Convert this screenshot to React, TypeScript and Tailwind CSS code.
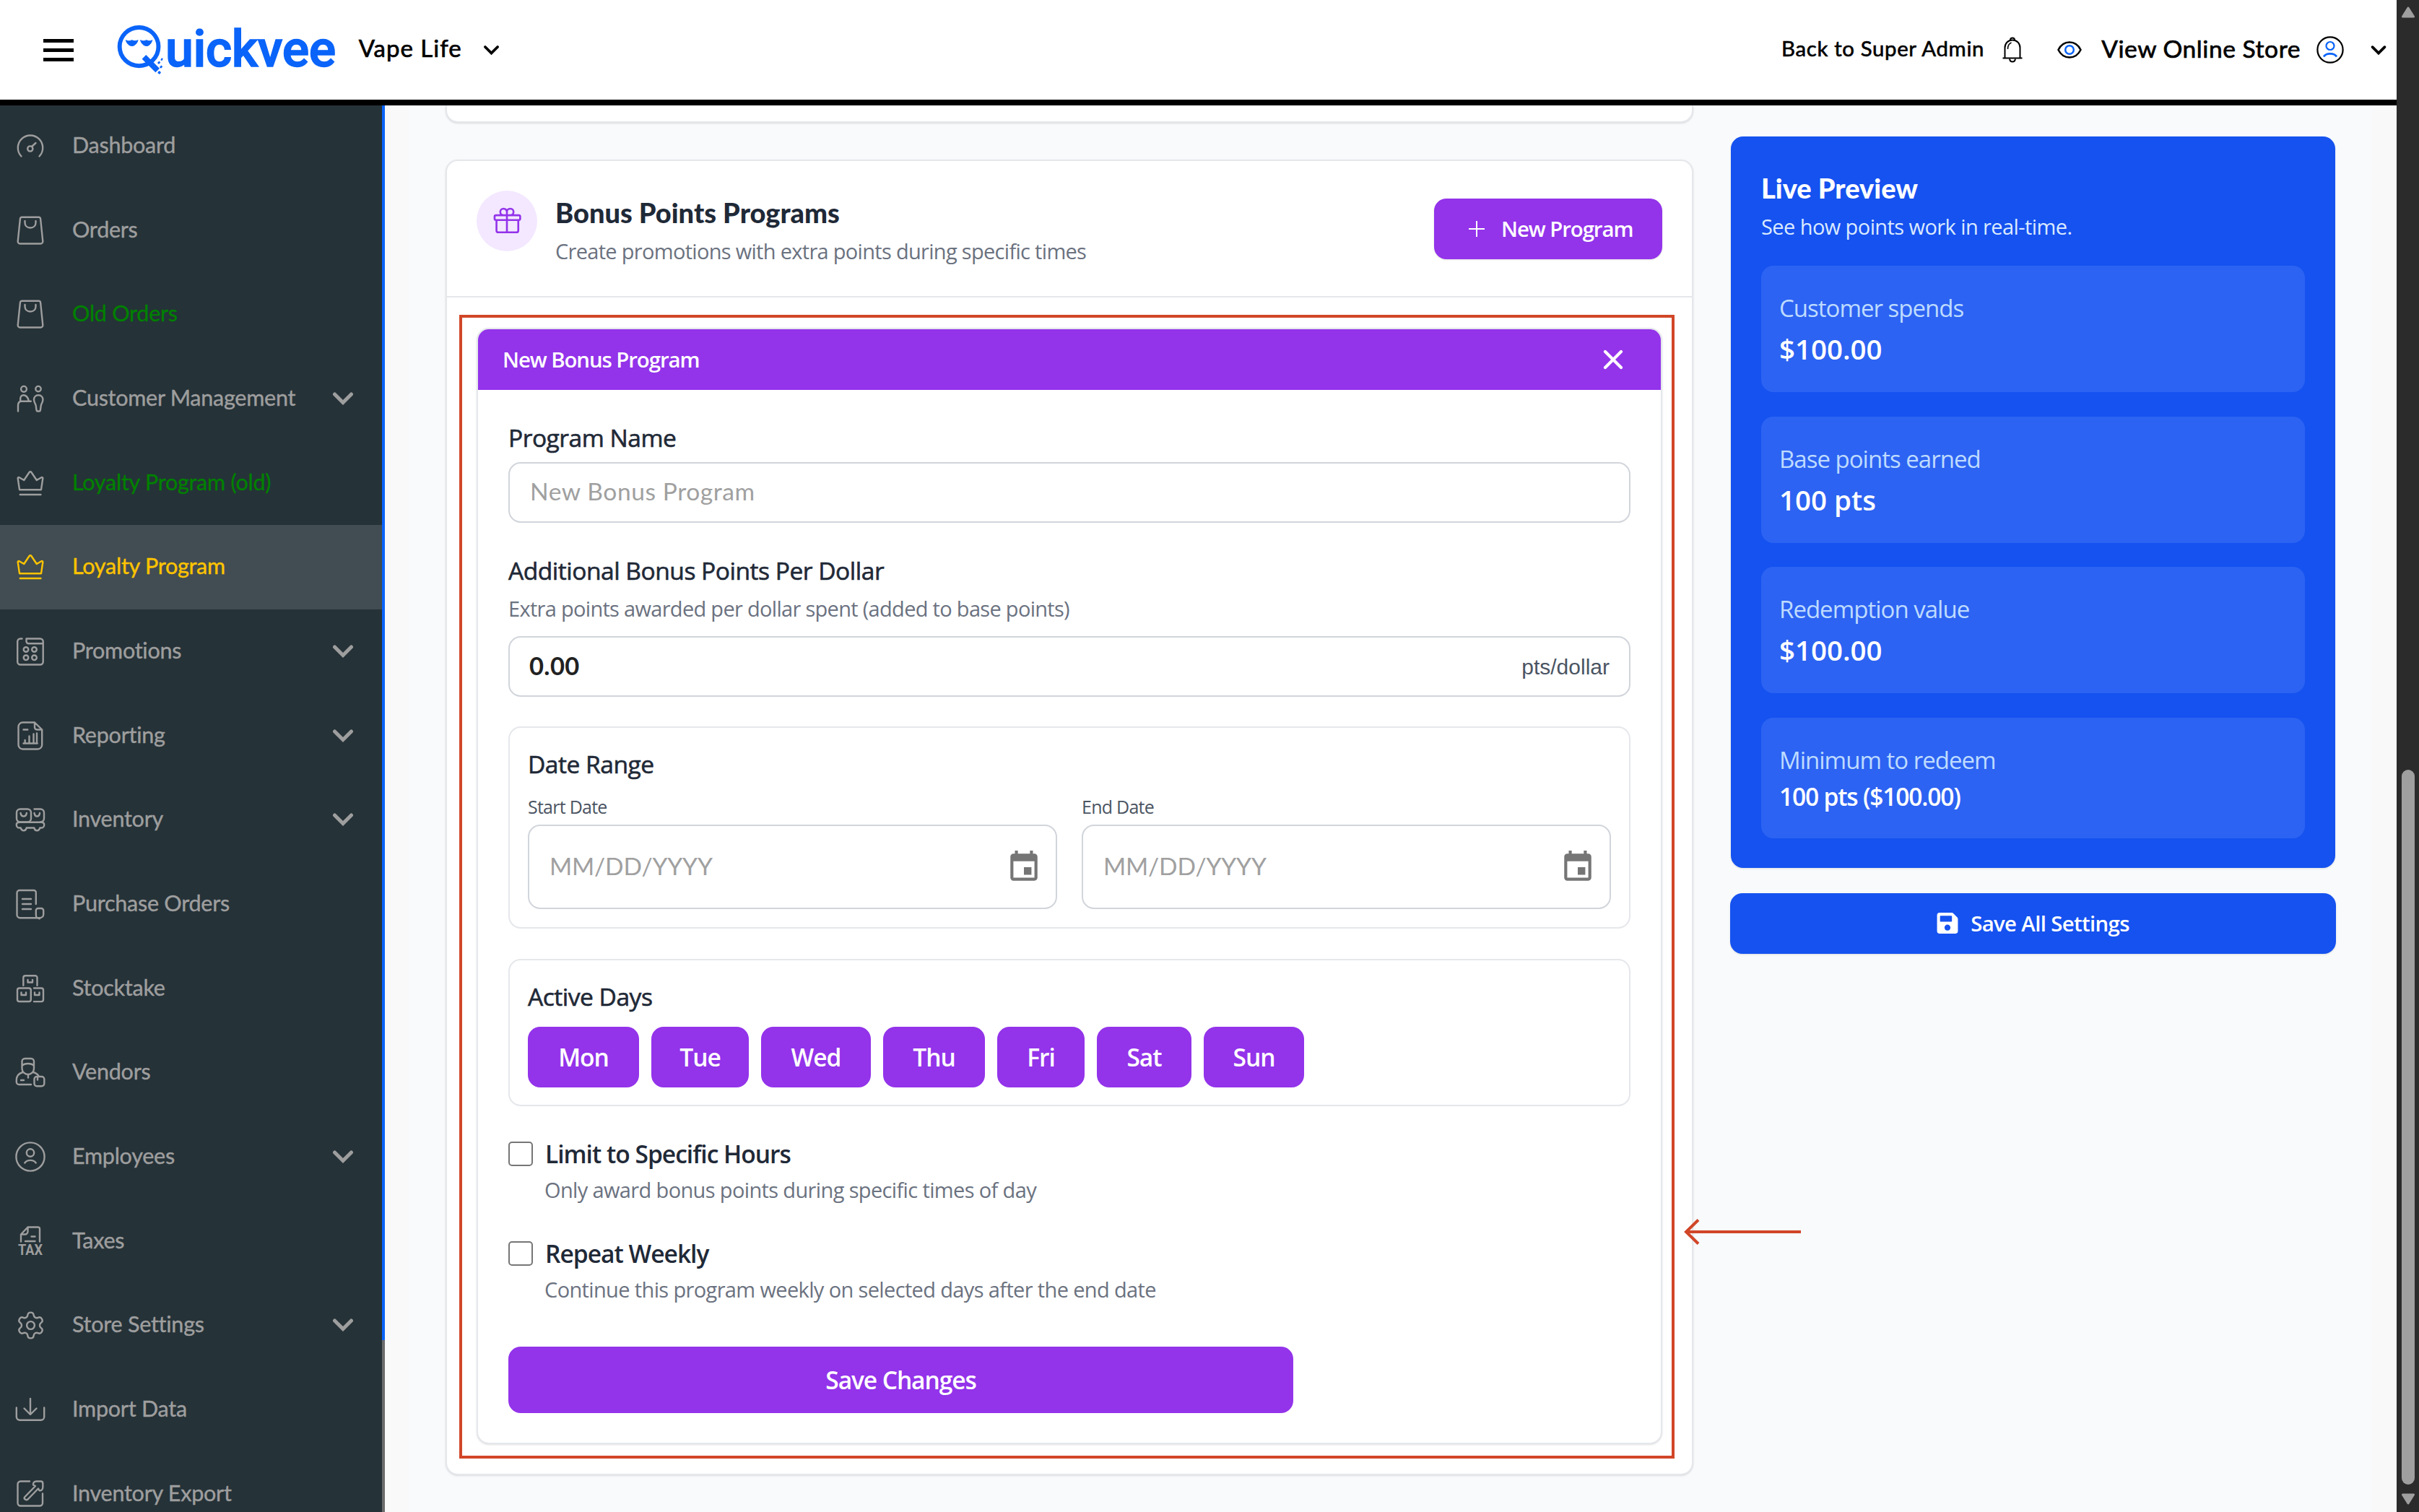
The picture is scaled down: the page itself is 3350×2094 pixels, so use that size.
import React from 'react';
import { Settings } from 'lucide-react';
import { MdEvent } from 'react-icons/md';
import { FaSave } from 'react-icons/fa';
import { HiOutlineGift } from 'react-icons/hi2';
import clsx from 'clsx';

interface NavItem { label: string; icon: React.ReactNode; expandable?: boolean; legacy?: boolean; active?: boolean }

const Glyph: React.FC<{ children: React.ReactNode }> = ({ children }) => (
  <svg viewBox="0 0 40 40" className="w-10 h-10 overflow-visible" fill="none" stroke="currentColor" strokeWidth={2.4} strokeLinecap="round" strokeLinejoin="round">
    {children}
  </svg>
);

const DashboardIcon = () => (
  <Glyph>
    <path d="M7.5 34.5A17.2 17.2 0 1 1 32.5 34.5" />
    <circle cx="19.8" cy="24" r="3.6" />
    <path d="M22 21l5.5-5" />
  </Glyph>
);

const BagIcon = () => (
  <Glyph>
    <path d="M8.5 1.8h23a2.6 2.6 0 0 1 2.6 2.4l3.2 31a3 3 0 0 1-3 3.3H5.700a3 3 0 0 1-3-3.300l3.200-31a2.600 2.600 0 0 1 2.600-2.400z" />
    <path d="M12.5 7v2.500c0 4 3 7 7.500 7s7.500-3 7.500-7V7" />
  </Glyph>
);

const CustomersIcon = () => (
  <Glyph>
    <circle cx="11" cy="6.800" r="3.900" />
    <circle cx="31" cy="6.600" r="3.700" />
    <path d="M3 37.500V30c0-3.800 1.800-6.200 4.800-6.200h13M6.200 23.500v-3.300c0-3 1.800-4.900 4.300-4.900 3.700 0 5.800 2.300 7.300 7.500" />
    <path d="M31.200 15.200c-3.800 0-6.200 2.800-6.200 6.300 0 3.600 2.200 5.400 2.700 8.300l.8 6.200c.1.900.8 1.500 1.700 1.500h2c.9 0 1.600-.6 1.700-1.500l.8-6.200c.5-2.900 2.700-4.700 2.700-8.300 0-3.500-2.400-6.300-6.200-6.300z" />
  </Glyph>
);

const CrownIcon = () => (
  <Glyph>
    <path d="M5 29.200 2.700 13.500c-.2-1.200 1-1.900 2-1.300l6.500 3.800L18.600 5c.7-1.100 2.100-1.100 2.800 0L28.800 16l6.500-3.800c1-.6 2.200.1 2 1.300L35 29.200z" />
    <path d="M5.800 36h28.600" />
  </Glyph>
);

const PromotionsIcon = () => (
  <Glyph>
    <path d="M8.500 2.500H6.200a4 4 0 0 0-4 4v28a4 4 0 0 0 4 4h27.500a4 4 0 0 0 4-4v-28a4 4 0 0 0-4-4H14.500v3.800a3 3 0 0 0 3 3H36" />
    <circle cx="14" cy="17.500" r="3.300" /><circle cx="25.500" cy="17.500" r="3.300" />
    <circle cx="14" cy="28.800" r="3.300" /><circle cx="25.500" cy="28.800" r="3.300" />
  </Glyph>
);

const ReportingIcon = () => (
  <Glyph>
    <path d="M26 1.500H9.500a6 6 0 0 0-6 6v25a6 6 0 0 0 6 6h20.700a6 6 0 0 0 6-6V11.500L26 1.500v6.700a3.300 3.300 0 0 0 3.300 3.300h6.900" />
    <path d="M10.500 11.500h5.800M10.500 30.500h19.200M12.600 30v-4M18.500 30v-9.500M24.500 30V17.500M29 30V16.500" />
  </Glyph>
);

const InventoryIcon = () => (
  <Glyph>
    <rect x="1" y="5.500" width="20" height="18" rx="5" />
    <path d="M25.500 5.500h8.500a5 5 0 0 1 5 5v8a5 5 0 0 1-5 5" />
    <path d="M6.500 11c.5 3.200 2 4.500 4.200 4.500s3.700-1.300 4.200-4.500M25.500 11c.5 3.200 1.800 4.500 3.800 4.500s3.300-1.300 3.800-4.500" />
    <path d="M5 23.800h30c2.500 0 4.200 1.300 4.200 3.400S38 31.500 35.500 31.500h-2.200c-.6 2.400-2 3.900-4 3.900s-3.500-1.500-4-3.900H14.700c-.5 2.400-2 3.900-4 3.900s-3.400-1.500-4-3.900H4.500C2 31.500.800 29.300.800 27.200s1.700-3.400 4.200-3.400z" />
  </Glyph>
);

const PurchaseIcon = () => (
  <Glyph>
    <path d="M27.800 20V4a3 3 0 0 0-3-3H5a3.500 3.500 0 0 0-3.500 3.500v30.500a4.200 4.200 0 0 0 4.200 4.200h27.500a5 5 0 0 0 5-5v-5.200a3 3 0 0 0-3-3h-4.400a3 3 0 0 0-3 3v6.200a5 5 0 0 0 5 5" />
    <path d="M9 13h12M9 20h12M9 27h12" />
  </Glyph>
);

const StocktakeIcon = () => (
  <Glyph>
    <path d="M10.300 15.800V5a2.800 2.800 0 0 1 2.800-2.800h13.600A2.800 2.800 0 0 1 29.500 5v10.800" />
    <rect x="2" y="19.500" width="18.800" height="18.500" rx="2.800" />
    <path d="M25 19.500h10.200a2.800 2.800 0 0 1 2.800 2.800v13a2.800 2.800 0 0 1-2.800 2.800H25" />
    <path d="M16.500 8v3.500h6.500V8M7.500 25.500V29H14v-3.500M26 25.500V29h6.500v-3.500" />
  </Glyph>
);

const VendorsIcon = () => (
  <Glyph>
    <path d="M8.500 11V5a4 4 0 0 1 4-4h8.500a4 4 0 0 1 4 4v6M8.500 11c3.500-4 13-4 16.500 0v4c0 4.500-4 8-8.200 8s-8.300-3.500-8.300-8z" />
    <path d="M9.500 20C4 21.500.800 25.500.800 31v2.500A3.500 3.500 0 0 0 4.300 37H21M24 20c3.500 1 6 2.500 7.500 5M17 23.500v4M7 31h4" />
    <rect x="25.500" y="26" width="13.800" height="13.300" rx="3.500" />
    <path d="M30 26.500v4" />
  </Glyph>
);

const EmployeesIcon = () => (
  <Glyph>
    <circle cx="20" cy="20" r="19.600" />
    <circle cx="20" cy="14.500" r="5.200" />
    <path d="M12.300 28.500c3.500-4.800 12-4.800 15.400 0" />
  </Glyph>
);

const TaxesIcon = () => (
  <Glyph>
    <path d="M7 21.500V11.500L16.500 1.500h14a2.500 2.500 0 0 1 2.500 2.500v17.500M7 11.500h5.500a4 4 0 0 0 4-4v-6M21.500 14.500h5M13 21h13.500" />
    <text x="3" y="40" fontSize="20" fontWeight={700} textLength="34" lengthAdjust="spacingAndGlyphs" fontFamily="Roboto, sans-serif" fill="currentColor" stroke="none">TAX</text>
  </Glyph>
);

const ImportIcon = () => (
  <Glyph>
    <path d="M.8 17.500v12.700a4.500 4.500 0 0 0 4.500 4.500h29.400a4.500 4.500 0 0 0 4.500-4.500V17.500M20 5v21.500M11.500 18.500l8.500 8.500 8.500-8.500" />
  </Glyph>
);

const ExportIcon = () => (
  <Glyph>
    <path d="M19 3.500H6.500a4 4 0 0 0-4 4v26a4 4 0 0 0 4 4H33a4 4 0 0 0 4-4V20.500" />
    <path d="M12 25.500 27 10l-3-1.500c-.5-3 1.500-5 4.500-5h6c1.800 0 2.800 1 2.800 2.800v5.500c0 3-2 5-4.800 4.500L31 13.500 16.500 28.500c-2.500 1.800-5.800-.5-4.500-3z" />
  </Glyph>
);

const NAV: NavItem[] = [
  { label: 'Dashboard', icon: <DashboardIcon /> },
  { label: 'Orders', icon: <BagIcon /> },
  { label: 'Old Orders', icon: <BagIcon />, legacy: true },
  { label: 'Customer Management', icon: <CustomersIcon />, expandable: true },
  { label: 'Loyalty Program (old)', icon: <CrownIcon />, legacy: true },
  { label: 'Loyalty Program', icon: <CrownIcon />, active: true },
  { label: 'Promotions', icon: <PromotionsIcon />, expandable: true },
  { label: 'Reporting', icon: <ReportingIcon />, expandable: true },
  { label: 'Inventory', icon: <InventoryIcon />, expandable: true },
  { label: 'Purchase Orders', icon: <PurchaseIcon /> },
  { label: 'Stocktake', icon: <StocktakeIcon /> },
  { label: 'Vendors', icon: <VendorsIcon /> },
  { label: 'Employees', icon: <EmployeesIcon />, expandable: true },
  { label: 'Taxes', icon: <TaxesIcon /> },
  { label: 'Store Settings', icon: <Settings className="w-[43px] h-[43px] -m-[1.5px]" strokeWidth={1.35} />, expandable: true },
  { label: 'Import Data', icon: <ImportIcon /> },
  { label: 'Inventory Export', icon: <ExportIcon /> },
];

const DAYS = [
  { name: 'Mon', width: 'w-[154px]' },
  { name: 'Tue', width: 'w-[135px]' },
  { name: 'Wed', width: 'w-[152px]' },
  { name: 'Thu', width: 'w-[141px]' },
  { name: 'Fri', width: 'w-[121px]' },
  { name: 'Sat', width: 'w-[131px]' },
  { name: 'Sun', width: 'w-[139px]' },
];

const PREVIEW = [
  { label: 'Customer spends', value: '$100.00' },
  { label: 'Base points earned', value: '100 pts' },
  { label: 'Redemption value', value: '$100.00' },
];

const Chevron: React.FC<{ className: string; width?: number }> = ({ className, width = 5 }) => (
  <svg viewBox="0 0 30 20" className={className} fill="none" stroke="currentColor" strokeWidth={width} strokeLinecap="round" strokeLinejoin="miter">
    <path d="M3.500 4 15 15.500 26.500 4" />
  </svg>
);

const Header = () => (
  <header className="flex h-[146px] w-[3319px] items-center border-b-8 border-black bg-white pl-[60px] font-['Lato',sans-serif] text-black">
    <div className="flex w-[42px] flex-col gap-2">
      <span className="h-[5px] bg-black" />
      <span className="h-[5px] bg-black" />
      <span className="h-[5px] bg-black" />
    </div>

    {/* Logo */}
    <div className="ml-[60px] flex items-center text-[#0a64f9]">
      <svg viewBox="0 0 68 70" className="h-[70px] w-[67px]" fill="none" stroke="currentColor">
        <ellipse cx="31" cy="30.500" rx="27.300" ry="27" strokeWidth="6" />
        <path d="M38 45 57 64" strokeWidth="8" />
        <path d="M12.500 21.500c3 1.500 5 1.500 8.500 0 3.500 1.500 5.500 1.500 8.500 0-1.500 5-5 8-8.500 8s-7-3-8.500-8zM33 21.500c3 1.500 5 1.500 8.500 0 3.500 1.500 5 1.500 8 0-1.500 5-4.500 8-8 8s-7-3-8.500-8z" fill="currentColor" stroke="currentColor" strokeWidth="1" />
        <path d="M58 52l2 2M62 48l2 1M61 58l2 2M58 66l3 2" strokeWidth="3.500" />
      </svg>
      <span className="-mt-0.5 font-['Roboto',sans-serif] text-[70px] font-medium leading-[70px] tracking-[-0.007em] [-webkit-text-stroke:1.4px]">uickvee</span>
    </div>

    <span className="-mt-1 ml-[32px] text-[33px] tracking-[0.03em] [-webkit-text-stroke:0.7px]">Vape Life</span>
    <Chevron className="ml-[29px] h-[15px] w-[23px]" width={5} />

    <span className="-mt-1 ml-auto text-[29.400px] tracking-[0.022em] [-webkit-text-stroke:0.6px]">Back to Super Admin</span>
    <svg viewBox="0 0 30 36" className="ml-6 h-9 w-[30px]" fill="none" stroke="black" strokeWidth={2}>
      <path d="M1.500 29.500h27M4.500 29V15C4.500 9 9 4.500 15 4.500S25.500 9 25.500 15v14" />
      <path d="M12 4.500C12 2.500 13 1.500 15 1.500s3 1 3 3M11 30.500c.5 3 1.800 4 4 4s3.500-1 4-4" />
      <path d="M8.500 17c0-5 1.500-7.500 5-9" strokeWidth={1.500} />
    </svg>
    <svg viewBox="0 0 34 24" className="ml-[47px] h-6 w-[34px]" fill="none" strokeWidth={2.500}>
      <path d="M1.500 12C5 5 10.500 1.500 17 1.500S29 5 32.500 12C29 19 23.500 22.500 17 22.500S5 19 1.500 12z" stroke="black" />
      <circle cx="17" cy="12" r="5.800" stroke="#0a64f9" />
    </svg>
    <span className="-mt-1 ml-[27px] text-[33.600px] tracking-[0.016em] [-webkit-text-stroke:0.7px]">View Online Store</span>
    <svg viewBox="0 0 38 38" className="ml-[22px] h-[38px] w-[38px]" fill="none" strokeWidth={2.200}>
      <circle cx="19" cy="19" r="17.600" stroke="black" />
      <circle cx="19" cy="13.500" r="5.500" stroke="#0a64f9" />
      <path d="M10 28.500c3.500-5.500 14.500-5.500 18 0" stroke="#0a64f9" strokeWidth={2.800} />
    </svg>
    <Chevron className="ml-[37px] mr-[14px] h-[15px] w-[22px]" width={5} />
  </header>
);

const Sidebar = () => (
  <aside className="flex h-[1948px] w-[533px] shrink-0 overflow-hidden bg-[#253238] font-['Lato',sans-serif]">
    <nav className="-mt-[2.400px] w-[529px]">
      {NAV.map(item => (
        <a
          key={item.label}
          className={clsx(
            'flex h-[116.670px] items-center pl-[22px] pr-[39px]',
            item.active ? 'bg-[#414d52] text-[#ffc400]' : 'text-[#9e9e9e]',
          )}
        >
          {item.icon}
          <span className={clsx('-mt-0.5 ml-[38px] whitespace-nowrap text-[30.500px] tracking-[-0.008em] [-webkit-text-stroke:0.4px]', item.legacy && 'text-[#008000]')}>{item.label}</span>
          {item.expandable && <Chevron className="ml-auto h-5 w-[30px]" />}
        </a>
      ))}
    </nav>
    <div className="w-1 bg-[#6b6b6b]">
      <div className="h-[1710px] bg-[#0a64f9]" />
    </div>
  </aside>
);

const FieldTitle: React.FC<{ children: React.ReactNode }> = ({ children }) => (
  <div className="h-[50px] text-[33.600px] font-medium leading-[50px] tracking-[-0.015em] [-webkit-text-stroke:0.6px]">{children}</div>
);

const DateField: React.FC<{ label: string }> = ({ label }) => (
  <div className="flex-1">
    <div className="h-[34px] text-[25px] leading-[34px] tracking-[-0.03em] text-[#4b5563]">{label}</div>
    <div className="mt-2 flex h-[117px] items-center justify-between rounded-[17px] border-2 border-[#d1d5db] pl-7 pr-[19px]">
      <span className="-mt-0.5 font-['Lato',sans-serif] text-[33.600px] tracking-[-0.005em] text-[#a0a0a0]">MM/DD/YYYY</span>
      <MdEvent className="h-[50px] w-[50px] text-[#757575]" />
    </div>
  </div>
);

const CheckRow: React.FC<{ title: string; hint: string }> = ({ title, hint }) => (
  <label className="block">
    <div className="flex h-[50px] items-center">
      <span className="h-[34px] w-[34px] rounded-[5px] border-2 border-[#767676] bg-white" />
      <span className="ml-[17px] text-[33.600px] font-semibold leading-[50px] tracking-[-0.03em]">{title}</span>
    </div>
    <div className="ml-[50px] mt-1 h-[42px] text-[29px] leading-[42px] tracking-[-0.022em] text-[#6b7280]">{hint}</div>
  </label>
);

const ProgramForm = () => (
  <div className="overflow-hidden rounded-[17px] border-2 border-[#e5e7eb] bg-white shadow-sm">
    <div className="flex h-[84px] items-center justify-between bg-[#9333ea] pl-[34px] pr-[52px] text-white">
      <span className="text-[29.400px] font-semibold tracking-[-0.037em]">New Bonus Program</span>
      <svg viewBox="0 0 28 28" className="h-7 w-7" stroke="currentColor" strokeWidth={4.200} strokeLinecap="round">
        <path d="M3 3l22 22M25 3 3 25" />
      </svg>
    </div>

    <div className="px-[42px] pb-[41px] pt-[41px]">
      <FieldTitle>Program Name</FieldTitle>
      <div className="mt-[9px] flex h-[84px] items-center rounded-[17px] border-2 border-[#d1d5db] px-7">
        <span className="-mt-1 font-['Lato',sans-serif] text-[33.600px] tracking-[0.017em] text-[#a0a0a0]">New Bonus Program</span>
      </div>

      <div className="mt-[41px]"><FieldTitle>Additional Bonus Points Per Dollar</FieldTitle></div>
      <div className="mt-[7px] h-[42px] text-[29px] leading-[42px] tracking-[-0.024em] text-[#6b7280]">Extra points awarded per dollar spent (added to base points)</div>
      <div className="mt-[17px] flex h-[84px] items-center justify-between rounded-[17px] border-2 border-[#d1d5db] px-[27px]">
        <span className="-mt-0.5 font-['Lato',sans-serif] text-[34.500px] font-bold tracking-[0.01em] text-[#212121]">0.00</span>
        <span className="font-['Liberation_Sans',sans-serif] text-[30px] text-[#4b5563]">pts/dollar</span>
      </div>

      {/* Date range */}
      <div className="mt-[41px] h-[280px] rounded-[17px] border-2 border-[#e5e7eb] px-[25px] pt-[25px]">
        <FieldTitle>Date Range</FieldTitle>
        <div className="mt-[17px] flex gap-[34px]">
          <DateField label="Start Date" />
          <DateField label="End Date" />
        </div>
      </div>

      {/* Active days */}
      <div className="mt-[42px] h-[204px] rounded-[17px] border-2 border-[#e5e7eb] px-[25px] pt-[25px]">
        <FieldTitle>Active Days</FieldTitle>
        <div className="mt-[17px] flex gap-[17px]">
          {DAYS.map(d => (
            <button key={d.name} className={clsx('h-[84px] rounded-[17px] bg-[#9333ea] text-[33.600px] font-semibold tracking-[-0.03em] text-white', d.width)}>{d.name}</button>
          ))}
        </div>
      </div>

      <div className="mt-[41px] flex flex-col gap-[42px]">
        <CheckRow title="Limit to Specific Hours" hint="Only award bonus points during specific times of day" />
        <CheckRow title="Repeat Weekly" hint="Continue this program weekly on selected days after the end date" />
      </div>

      <button className="mt-[58px] block h-[92px] w-[1087px] rounded-[17px] bg-[#9333ea] text-[33.600px] font-semibold tracking-[-0.033em] text-white">Save Changes</button>
    </div>
  </div>
);

const BonusCard = () => (
  <section className="relative rounded-[17px] border-2 border-[#e5e7eb] bg-white shadow-sm">
    <div className="flex h-[189px] border-b-2 border-[#e5e7eb] px-[41px]">
      <div className="mt-[41px] flex h-[84px] w-[84px] items-center justify-center rounded-full bg-[#f3e8ff]">
        <HiOutlineGift className="h-[42px] w-[42px] text-[#9333ea]" />
      </div>
      <div className="ml-[25px] mt-[46px]">
        <div className="h-[50px] font-['Lato',sans-serif] text-[38px] font-black leading-[50px]">Bonus Points Programs</div>
        <div className="mt-2 h-[42px] text-[29px] leading-[42px] tracking-[-0.024em] text-[#6b7280]">Create promotions with extra points during specific times</div>
      </div>
      <button className="ml-auto mt-[52px] flex h-[84px] w-[316px] items-center rounded-[17px] bg-[#9333ea] pl-12 text-[29.400px] font-semibold tracking-[-0.037em] text-white shadow-sm">
        <svg viewBox="0 0 22 22" className="mr-[23px] h-[22px] w-[22px]" stroke="currentColor" strokeWidth={2}>
          <path d="M11 0v22M0 11h22" />
        </svg>
        New Program
      </button>
    </div>
    <div className="px-[41px] pb-[41px] pt-[42px]">
      <ProgramForm />
    </div>

    {/* Callout frame and arrow */}
    <div className="absolute left-[17px] top-[213px] h-[1584px] w-[1683px] border-4 border-[#d14628]" />
    <svg viewBox="0 0 162 36" className="absolute left-[1713px] top-[1465px] h-9 w-[162px]" fill="none" stroke="#d14628" strokeWidth={4}>
      <path d="M3 18h159M20 1.500 3 18l17 16.500" />
    </svg>
  </section>
);

const LivePreview = () => (
  <aside className="w-[837px]">
    <div className="rounded-[17px] bg-[#1552f0] px-[42px] pb-[41px] pt-[46px] shadow-sm">
      <div className="h-[50px] font-['Lato',sans-serif] text-[38px] font-black leading-[50px] text-white">Live Preview</div>
      <div className="mt-2 h-[42px] text-[29px] leading-[42px] tracking-[-0.02em] text-[#dbeafe]">See how points work in real-time.</div>
      <div className="mt-[33px] flex flex-col gap-[33.600px]">
        {PREVIEW.map(p => (
          <div key={p.label} className="h-[175px] rounded-[17px] bg-white/10 px-[25px] pt-[34px]">
            <div className="h-[50px] text-[33px] leading-[50px] tracking-[-0.03em] text-[#bedbff]">{p.label}</div>
            <div className="mt-[6px] h-[50px] text-[38.500px] font-semibold leading-[50px] text-white">{p.value}</div>
          </div>
        ))}
        <div className="h-[167px] rounded-[17px] bg-white/10 px-[25px] pt-[34px]">
          <div className="h-[50px] text-[33px] leading-[50px] tracking-[-0.03em] text-[#bedbff]">Minimum to redeem</div>
          <div className="h-[50px] text-[33.600px] font-semibold leading-[50px] tracking-[-0.036em] text-white">100 pts ($100.00)</div>
        </div>
      </div>
    </div>
    <button className="-mx-px mt-[35px] flex h-[84px] w-[839px] items-center justify-center gap-[17px] rounded-[17px] bg-[#1552f0] text-[29.400px] font-semibold tracking-[-0.022em] text-white shadow-sm">
      <FaSave className="h-[33px] w-[30px]" />
      Save All Settings
    </button>
  </aside>
);

const Scrollbar = () => (
  <div className="flex h-[2094px] w-[31px] flex-col items-center bg-[#2b2b2b] text-[#9f9f9f]">
    <svg viewBox="0 0 18 16" className="mt-[9px] h-4 w-[18px]" fill="currentColor" stroke="currentColor" strokeWidth={3} strokeLinejoin="round">
      <path d="M9 2 16.500 14h-15z" />
    </svg>
    <div className="mt-[1041px] h-[990px] w-[18px] rounded-full bg-[#9f9f9f]" />
    <svg viewBox="0 0 18 16" className="mt-3 h-4 w-[18px]" fill="currentColor" stroke="currentColor" strokeWidth={3} strokeLinejoin="round">
      <path d="M9 14 16.500 2h-15z" />
    </svg>
  </div>
);

const App: React.FC = () => (
  <div className="flex h-[2094px] w-[3350px] overflow-hidden font-['Open_Sans',sans-serif] text-[#1f2937]">
    <div className="w-[3319px]">
      <Header />
      <div className="flex">
        <Sidebar />
        <main className="flex h-[1948px] flex-1 bg-[#f9f9f9] px-[34px]">
          <div className="flex w-[2718px] bg-[#f8fafc] pl-[50px]">
            <div className="w-[1728px]">
              {/* tail of the previous settings card */}
              <div className="mb-[51px] h-6 rounded-b-[17px] border-x-2 border-b-2 border-[#e5e7eb] bg-white shadow-sm" />
              <BonusCard />
            </div>
            <div className="ml-[52px] mt-[43px]">
              <LivePreview />
            </div>
          </div>
        </main>
      </div>
    </div>
    <Scrollbar />
  </div>
);

export default App;
